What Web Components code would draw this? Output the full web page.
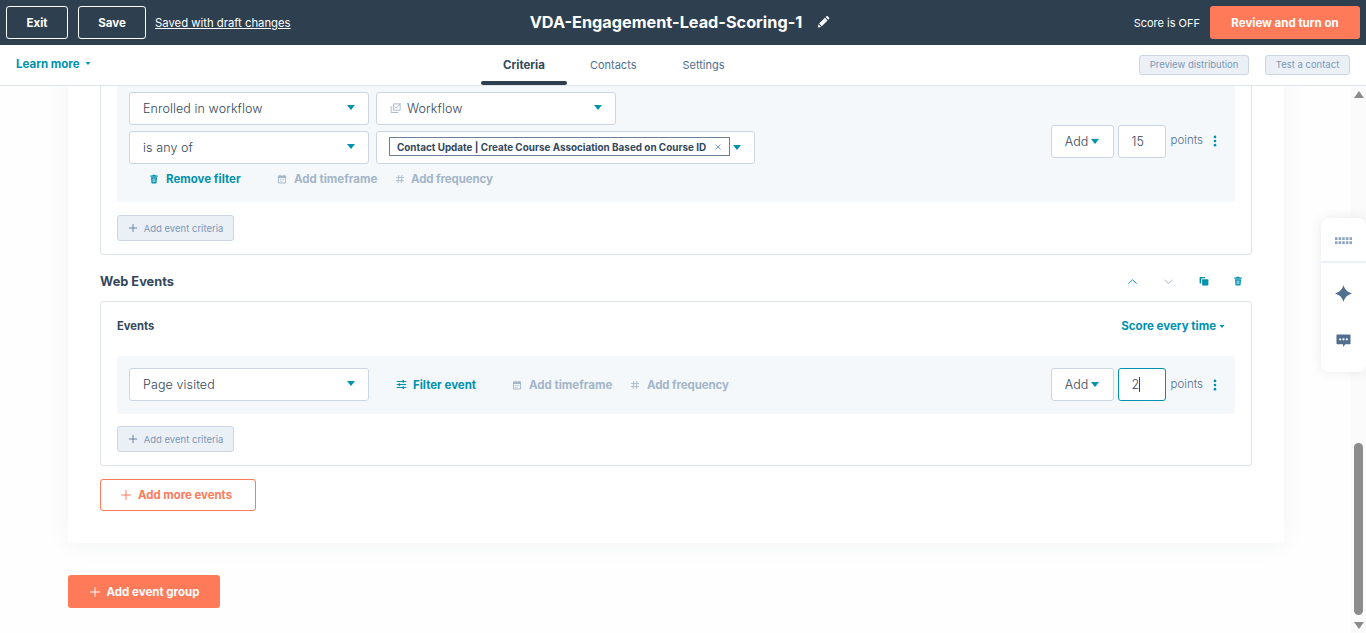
<!DOCTYPE html>
<html lang="en">
<head>
<meta charset="utf-8">
<title>Lead scoring</title>
<style>
  html, body { margin: 0; height: 100%; overflow: hidden; }
  body { font-family: Inter, "Liberation Sans", sans-serif; color: #33475b; background: #fff; }
</style>
</head>
<body>
<score-app></score-app>
<script>
const ICONS = {
  pencil: '<path fill="currentColor" d="M2 14.200l.8-3.600 3 3L2 14.200zM3.600 9.800l6.600-6.600 3 3-6.600 6.600-3-3zM11 2.400l1-1c.4-.4 1-.4 1.400 0l1.600 1.600c.4.4.4 1 0 1.400l-1 1-3-3z"/>',
  trash: '<path fill="currentColor" d="M6 1h4l.6 1.400H14v1.800H2V2.400h3.400L6 1zM3.200 5.200h9.600l-.7 9.200c0 .4-.4.6-.8.6H4.700c-.4 0-.8-.2-.8-.6l-.7-9.200zM6 7v6h1.200V7H6zm2.800 0v6H10V7H8.800z"/>',
  calendar: '<path fill="currentColor" d="M4 1h1.500v1.500h5V1H12v1.500h1c.8 0 1.500.7 1.500 1.500v9.500c0 .8-.7 1.500-1.500 1.500H3c-.8 0-1.500-.7-1.500-1.500V4c0-.8.7-1.500 1.500-1.500h1V1zM3 6.500v7h10v-7H3zm1.500 1.500h1.500v1.500H4.500V8zm2.800 0h1.500v1.500H7.300V8zM10 8h1.500v1.500H10V8zm-5.500 2.700H6v1.500H4.500v-1.500zm2.800 0h1.500v1.500H7.300v-1.500z"/>',
  hash: '<path fill="none" stroke="currentColor" stroke-width="1.300" d="M6 1.500L5 14.500M11 1.500l-1 13M1.800 5.500h12.700M1.500 10.500h12.700"/>',
  sliders: '<path fill="none" stroke="currentColor" stroke-width="1.500" d="M1 3.500h14M1 8h14M1 12.500h14"/><path fill="currentColor" d="M9.500 1.500h2v4h-2zM4 6h2v4H4zM9.500 10.500h2v4h-2z"/>',
  plus: '<path fill="none" stroke="currentColor" stroke-width="1.300" d="M8 1.500v13M1.500 8h13"/>',
  close: '<path fill="none" stroke="currentColor" stroke-width="1.400" d="M3 3l10 10M13 3L3 13"/>',
  workflow: '<path fill="none" stroke="currentColor" stroke-width="1.200" d="M4.500 2.500h9v8.500h-9zM1.500 5.500v8.500h9.500"/><path fill="none" stroke="currentColor" stroke-width="1.300" d="M6.500 6l2 2 5.500-6"/>',
  up: '<path fill="none" stroke="currentColor" stroke-width="1.400" d="M2 11l6-5.500 6 5.500"/>',
  down: '<path fill="none" stroke="currentColor" stroke-width="1.400" d="M2 5.500L8 11l6-5.500"/>',
  copy: '<path fill="currentColor" d="M2 1.500h7.500v2H5.500c-1 0-2 1-2 2v6.500H2c-.6 0-1-.4-1-1V2.500c0-.6.4-1 1-1z"/><path fill="currentColor" d="M6 5h8c.6 0 1 .4 1 1v8c0 .6-.4 1-1 1H6c-.6 0-1-.4-1-1V6c0-.6.4-1 1-1z"/>',
  kebab: '<circle cx="8" cy="2.500" r="1.800" fill="currentColor"/><circle cx="8" cy="8" r="1.800" fill="currentColor"/><circle cx="8" cy="13.500" r="1.800" fill="currentColor"/>',
  grid: '<g fill="currentColor"><rect x="0" y="4" width="2.400" height="2.600"/><rect x="3.400" y="4" width="2.400" height="2.600"/><rect x="6.800" y="4" width="2.400" height="2.600"/><rect x="10.200" y="4" width="2.400" height="2.600"/><rect x="13.600" y="4" width="2.400" height="2.600"/><rect x="0" y="7.800" width="2.400" height="2.600"/><rect x="3.400" y="7.800" width="2.400" height="2.600"/><rect x="6.800" y="7.800" width="2.400" height="2.600"/><rect x="10.200" y="7.800" width="2.400" height="2.600"/><rect x="13.600" y="7.800" width="2.400" height="2.600"/></g>',
  sparkle: '<path fill="currentColor" d="M8 0c1 3.800 3.200 6.400 8 8-4.800 1.600-7 4.200-8 8-1-3.800-3.200-6.400-8-8 4.800-1.600 7-4.200 8-8z"/>',
  chat: '<path fill="currentColor" d="M1.500 1.500h13c.6 0 1 .4 1 1v8.500c0 .6-.4 1-1 1H10l-2.500 3v-3h-6c-.6 0-1-.4-1-1V2.500c0-.6.4-1 1-1z"/><g fill="#fff"><circle cx="4.500" cy="6.700" r="1.200"/><circle cx="8" cy="6.700" r="1.200"/><circle cx="11.500" cy="6.700" r="1.200"/></g>'
};

// Small base class, every element passes its markup here
class ShadowEl extends HTMLElement {
  constructor(html) {
    super();
    this.attachShadow({ mode: 'open' }).innerHTML = html;
  }
}

class XIcon extends HTMLElement {
  connectedCallback() {
    const size = this.getAttribute('size') || 12;
    const root = this.shadowRoot || this.attachShadow({ mode: 'open' });
    root.innerHTML = `<style>:host{display:inline-flex;flex:none}svg{display:block}</style>
      <svg width="${size}" height="${size}" viewBox="0 0 16 16">${ICONS[this.getAttribute('name')]}</svg>`;
  }
}
customElements.define('x-icon', XIcon);

const caret = (w, h) => `<svg class="caret" width="${w}" height="${h}" viewBox="0 0 10 6"><path fill="currentColor" d="M0 0h10L5 6z"/></svg>`;

class XButton extends ShadowEl {
  constructor() {
    super(`<style>
      :host{display:inline-flex;align-items:center;justify-content:center;gap:var(--gap,8px);box-sizing:border-box;
        border-radius:3px;font-weight:700;white-space:nowrap;flex:none}
      :host([kind=outline]){border:1px solid #fff;color:#fff;height:33px;font-size:11.500px}
      :host([kind=primary]){background:#ff7a59;color:#fff;height:33px;font-size:11.500px}
      :host([kind=secondary]){border:1px solid #ff7a59;color:#ff7a59;background:#fff;height:32px;font-size:11.400px}
      :host([kind=muted]){background:#eaf0f6;border:1px solid #cbd6e2;color:#7c98b6;height:26px;font-size:9.500px;font-weight:400}
      :host([kind=muted-sm]){background:#eaf0f6;border:1px solid #cbd6e2;color:#7c98b6;height:20px;font-size:9.500px;font-weight:400}
    </style><slot></slot>`);
  }
}
customElements.define('x-button', XButton);

class XSelect extends ShadowEl {
  constructor() {
    super(`<style>
      :host{display:flex;align-items:center;box-sizing:border-box;height:33px;background:#fff;border:1px solid #cbd6e2;
        border-radius:3px;padding:0 13px 0 13px;font-size:12.500px;font-weight:300;color:#33475b;flex:none}
      .label{flex:1;display:flex;align-items:center;gap:5px;white-space:nowrap;letter-spacing:.1px;padding-bottom:1px}
      .caret{color:#0091ae;flex:none;margin-bottom:2px}
    </style><span class="label"><slot></slot></span>${caret(8, 5)}`);
  }
}
customElements.define('x-select', XSelect);

class XAction extends ShadowEl {
  constructor() {
    super(`<style>
      :host{display:inline-flex;align-items:center;gap:7px;font-size:11.500px;font-weight:700;color:#0091ae;white-space:nowrap;flex:none}
      :host([disabled]){color:#a3b5c9}
      :host([tight]){letter-spacing:-.12px}
    </style><slot></slot>`);
  }
}
customElements.define('x-action', XAction);

class XPoints extends ShadowEl {
  constructor() {
    super(`<style>
      :host{display:flex;align-items:center;flex:none}
      .add{box-sizing:border-box;width:63px;height:33px;display:flex;align-items:center;justify-content:center;gap:3px;background:#fff;
        border:1px solid #cbd6e2;border-radius:3px;font-size:12.500px;font-weight:300}
      .caret{color:#0091ae}
      .num{box-sizing:border-box;width:48px;height:33px;margin-left:4px;display:flex;align-items:center;padding-left:13px;background:#fff;
        border:1px solid #cbd6e2;border-radius:3px;font-size:12.500px;font-weight:300}
      :host([focused]) .num{border-color:#0091ae}
      .cursor{width:1px;height:15px;background:#33475b;display:none}
      :host([focused]) .cursor{display:block}
      .unit{margin-left:5px;font-size:11.500px;font-weight:300;color:#516f90;padding-bottom:2px}
      x-icon{margin-left:6px;color:#0091ae}
    </style>
    <span class="add">Add ${caret(8, 5)}</span>
    <span class="num"><slot></slot><i class="cursor"></i></span>
    <span class="unit">points</span>
    <x-icon name="kebab" size="12"></x-icon>`);
  }
}
customElements.define('x-points', XPoints);

class XFilterPanel extends ShadowEl {
  constructor() {
    super(`<style>
      :host{display:flex;align-items:center;justify-content:space-between;background:#f5f8fa;border-radius:3px;padding:12px 14px 13px 12px}
    </style><div><slot></slot></div><slot name="points"></slot>`);
  }
}
customElements.define('x-filter-panel', XFilterPanel);

class XTopBar extends ShadowEl {
  constructor() {
    super(`<style>
      :host{display:grid;grid-template-columns:1fr auto 1fr;align-items:center;height:45px;background:#2e3f50;color:#fff;padding:0 6px;box-sizing:border-box}
      .side{display:flex;align-items:center}
      .right{justify-content:flex-end}
      .link{font-size:11.300px;text-decoration:underline;margin-left:9px}
      .title{display:flex;align-items:center;gap:14px;font-size:16.250px;font-weight:700;margin-right:6px;padding-bottom:2px}
      .score{font-size:11px;margin-right:10px}
      .exit{width:62px;margin-right:10px}.save{width:68px}.go{width:150px}
    </style>
    <div class="side">
      <x-button class="exit" kind="outline">Exit</x-button>
      <x-button class="save" kind="outline">Save</x-button>
      <span class="link">Saved with draft changes</span>
    </div>
    <div class="title">VDA-Engagement-Lead-Scoring-1 <x-icon name="pencil" size="14"></x-icon></div>
    <div class="side right">
      <span class="score">Score is OFF</span>
      <x-button class="go" kind="primary">Review and turn on</x-button>
    </div>`);
  }
}
customElements.define('x-top-bar', XTopBar);

class XSubNav extends ShadowEl {
  constructor() {
    super(`<style>
      :host{display:flex;align-items:stretch;height:41px;box-sizing:border-box;background:#fff;border-bottom:1px solid #dfe3eb;padding:0 16px}
      .learn{width:465px;display:flex;align-items:center;gap:5px;font-size:11.500px;font-weight:700;color:#0091ae;padding-bottom:3px}
      .tabs{display:flex}
      .tab{display:flex;align-items:center;padding:0 23px;font-size:11px;color:#516f90;position:relative}
      .tab.on{font-weight:700;font-size:11.500px;color:#33475b;padding:0 22px}
      .tab.on::after{content:"";position:absolute;left:0;right:0;bottom:0;height:4px;background:#2e3f50;border-radius:2px}
      .right{margin-left:auto;display:flex;align-items:center;gap:16px;padding-bottom:1px}
      .p{width:110px}.t{width:85px}
    </style>
    <div class="learn"><span>Learn more</span>${caret(6, 3)}</div>
    <div class="tabs"><span class="tab on">Criteria</span><span class="tab">Contacts</span><span class="tab">Settings</span></div>
    <div class="right">
      <x-button class="p" kind="muted-sm">Preview distribution</x-button>
      <x-button class="t" kind="muted-sm">Test a contact</x-button>
    </div>`);
  }
}
customElements.define('x-sub-nav', XSubNav);

class XEventBox extends ShadowEl {
  constructor() {
    super(`<style>
      :host{display:block;box-sizing:border-box;background:#fff;border:1px solid #dfe3eb;border-radius:3px;padding:0 16px 13px}
      ::slotted(x-button){margin-top:var(--btn-top,13px);width:117px;--gap:6px}
    </style><slot></slot>`);
  }
}
customElements.define('x-event-box', XEventBox);

class XScrollbar extends ShadowEl {
  constructor() {
    super(`<style>
      :host{display:flex;flex-direction:column;align-items:center;width:15px;flex:none;background:#fbfbfb;color:#8c8c8c}
      svg{flex:none}
      .top{margin-top:5px}
      .thumb{width:9px;height:172px;margin:auto 0 7px;background:#8c8c8c;border-radius:5px}
      .bottom{margin-bottom:4px}
    </style>
    <svg class="top" width="10" height="7" viewBox="0 0 10 7"><path fill="currentColor" d="M5 0l5 7H0z"/></svg>
    <div class="thumb"></div>
    <svg class="bottom" width="10" height="7" viewBox="0 0 10 7"><path fill="currentColor" d="M0 0h10L5 7z"/></svg>`);
  }
}
customElements.define('x-scrollbar', XScrollbar);

class XHelpRail extends ShadowEl {
  constructor() {
    super(`<style>
      :host{position:absolute;left:1321px;top:132px;width:45px;height:154px;background:#fff;border-radius:8px;
        box-shadow:0 0 12px rgba(45,62,80,.1);display:flex;flex-direction:column;align-items:center;color:#516f90}
      .a{height:45px;width:100%;padding-top:3px;display:flex;align-items:center;justify-content:center;border-bottom:2px solid #eaf0f6;box-sizing:border-box;color:#8da5bf}
      .s{margin-top:22px}.c{margin-top:31px}
    </style>
    <div class="a"><x-icon name="grid" size="17"></x-icon></div>
    <x-icon class="s" name="sparkle" size="17"></x-icon>
    <x-icon class="c" name="chat" size="15"></x-icon>`);
  }
}
customElements.define('x-help-rail', XHelpRail);

class ScoreApp extends ShadowEl {
  constructor() {
    super(`<style>
      :host{display:flex;flex-direction:column;height:100vh;font-family:Inter,"Liberation Sans",sans-serif;color:#33475b;overflow:hidden}
      .view{flex:1;min-height:0;display:flex;position:relative;overflow:hidden}
      .scroll{flex:1;min-width:0;padding:0 67px 0 68px;overflow:hidden;background:#fefefe}
      .card{margin-top:-23px;background:#fff;border-radius:3px;padding:0 32px 32px;box-shadow:0 1px 24px rgba(45,62,80,.06)}
      .first{padding-top:16px}
      .second{--btn-top:12px}
      x-filter-panel.tall{padding-bottom:8px}
      x-filter-panel.tall x-points{margin-bottom:4px}
      x-button x-icon{color:#516f90}
      x-button.more x-icon,x-button.group x-icon{color:inherit}
      .rows{display:flex;flex-direction:column;gap:6px}
      .row{display:flex;gap:7px}
      .multi{display:flex;align-items:center;box-sizing:border-box;width:379px;height:33px;background:#fff;border:1px solid #cbd6e2;border-radius:3px;padding:0 13px 0 12px;flex:none}
      .tag{display:flex;align-items:center;justify-content:space-between;box-sizing:border-box;width:341px;height:19px;margin-bottom:2px;border:1px solid #6a7f99;padding:0 7px;background:#fff;font-size:9.900px;font-weight:700;white-space:nowrap}
      .tag x-icon{color:#516f90}
      .multi svg{color:#0091ae;margin-left:3px;flex:none}
      .acts{display:flex;align-items:center;height:30px;padding-left:20px}
      x-select.wide{width:240px}
      .wf{color:#a3b5c9}
      .head{display:flex;align-items:center;justify-content:space-between;height:46px;box-sizing:border-box;padding-top:6px;font-size:12.800px;font-weight:700}
      .tools{display:flex;align-items:center;color:#0091ae;padding-right:9px}
      .tools x-icon:nth-child(2){color:#a3b5c9;margin-left:25px}
      .tools x-icon:nth-child(3){margin-left:25px}
      .tools x-icon:nth-child(4){margin-left:24px}
      .evhead{display:flex;align-items:center;justify-content:space-between;height:48px;margin-bottom:6px;font-size:11.200px;font-weight:700;padding-right:10px}
      .every{display:flex;align-items:center;gap:3px;color:#0091ae;font-size:11.500px}
      .line{display:flex;align-items:center}
      .more{margin-top:13px;width:156px;--gap:6px;padding-right:4px}
      .group{margin-top:32px;width:152px;--gap:6px}
    </style>
    <x-top-bar></x-top-bar>
    <x-sub-nav></x-sub-nav>
    <div class="view">
      <div class="scroll">
        <div class="card">
          <x-event-box class="first">
            <x-filter-panel class="tall">
              <div class="rows">
                <div class="row">
                  <x-select class="wide">Enrolled in workflow</x-select>
                  <x-select class="wide"><x-icon class="wf" name="workflow" size="12"></x-icon>Workflow</x-select>
                </div>
                <div class="row">
                  <x-select class="wide">is any of</x-select>
                  <div class="multi">
                    <span class="tag">Contact Update | Create Course Association Based on Course ID <x-icon name="close" size="8"></x-icon></span>
                    ${caret(8, 5)}
                  </div>
                </div>
              </div>
              <div class="acts">
                <x-action style="width:128px"><x-icon name="trash" size="10"></x-icon>Remove filter</x-action>
                <x-action disabled style="width:118px"><x-icon name="calendar" size="10"></x-icon>Add timeframe</x-action>
                <x-action disabled tight style="gap:6px"><x-icon name="hash" size="10"></x-icon>Add frequency</x-action>
              </div>
              <x-points slot="points">15</x-points>
            </x-filter-panel>
            <x-button kind="muted"><x-icon name="plus" size="10"></x-icon>Add event criteria</x-button>
          </x-event-box>
          <div class="head"><span>Web Events</span>
            <span class="tools">
              <x-icon name="up" size="11"></x-icon><x-icon name="down" size="11"></x-icon><x-icon name="copy" size="10"></x-icon><x-icon name="trash" size="10"></x-icon>
            </span>
          </div>
          <x-event-box class="second">
            <div class="evhead"><span>Events</span><span class="every">Score every time ${caret(6, 3)}</span></div>
            <x-filter-panel>
              <div class="line">
                <x-select class="wide">Page visited</x-select>
                <x-action style="margin-left:27px;width:116px;gap:6px"><x-icon name="sliders" size="11"></x-icon>Filter event</x-action>
                <x-action disabled style="width:118px"><x-icon name="calendar" size="10"></x-icon>Add timeframe</x-action>
                <x-action disabled tight><x-icon name="hash" size="10"></x-icon>Add frequency</x-action>
              </div>
              <x-points slot="points" focused>2</x-points>
            </x-filter-panel>
            <x-button kind="muted"><x-icon name="plus" size="10"></x-icon>Add event criteria</x-button>
          </x-event-box>
          <x-button class="more" kind="secondary"><x-icon name="plus" size="12"></x-icon>Add more events</x-button>
        </div>
        <x-button class="group" kind="primary"><x-icon name="plus" size="12"></x-icon>Add event group</x-button>
      </div>
      <x-scrollbar></x-scrollbar>
      <x-help-rail></x-help-rail>
    </div>`);
  }
}
customElements.define('score-app', ScoreApp);
</script>
</body>
</html>
